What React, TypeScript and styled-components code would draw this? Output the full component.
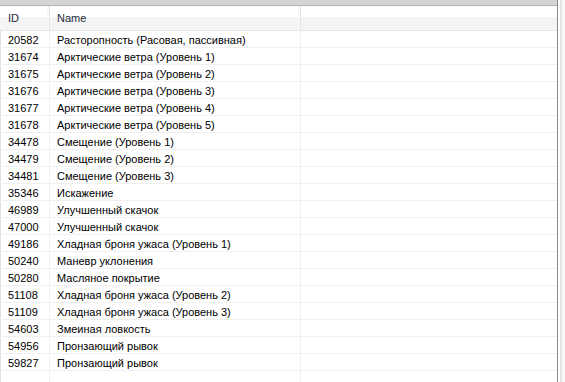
import React from "react";
import styled, { createGlobalStyle } from "styled-components";

const Global = createGlobalStyle`
  html, body { margin: 0; padding: 0; background: #ffffff; }
  body { font-family: "Liberation Sans", Arial, sans-serif; }
`;

const rows: [string, string][] = [
  ["20582", "Расторопность (Расовая, пассивная)"],
  ["31674", "Арктические ветра (Уровень 1)"],
  ["31675", "Арктические ветра (Уровень 2)"],
  ["31676", "Арктические ветра (Уровень 3)"],
  ["31677", "Арктические ветра (Уровень 4)"],
  ["31678", "Арктические ветра (Уровень 5)"],
  ["34478", "Смещение (Уровень 1)"],
  ["34479", "Смещение (Уровень 2)"],
  ["34481", "Смещение (Уровень 3)"],
  ["35346", "Искажение"],
  ["46989", "Улучшенный скачок"],
  ["47000", "Улучшенный скачок"],
  ["49186", "Хладная броня ужаса (Уровень 1)"],
  ["50240", "Маневр уклонения"],
  ["50280", "Масляное покрытие"],
  ["51108", "Хладная броня ужаса (Уровень 2)"],
  ["51109", "Хладная броня ужаса (Уровень 3)"],
  ["54603", "Змеиная ловкость"],
  ["54956", "Пронзающий рывок"],
  ["59827", "Пронзающий рывок"],
];

const Page = styled.div`
  width: 565px;
  height: 382px;
  display: flex;
  background: #ffffff;
  overflow: hidden;
`;

const ListFrame = styled.div`
  width: 557px;
  height: 382px;
  display: flex;
  flex-direction: column;
  border-right: 1px solid #8a8a8a;
  box-shadow: inset 1px 0 0 #e0e0e0;
`;

const TopBand = styled.div`
  height: 5px;
  background: #d4d4d4;
  border-bottom: 1px solid #b4b4b4;
  flex-shrink: 0;
`;

const Grid = styled.div`
  display: grid;
  grid-template-columns: 50px 251px 1fr;
`;

const HeaderRow = styled(Grid)`
  height: 24px;
  background: linear-gradient(#ffffff 0, #ffffff 11px, #f3f4f6 11px, #f3f4f6 100%);
  border-bottom: 1px solid #e5e5e5;
  flex-shrink: 0;
`;

const HeaderCell = styled.div<{ $pad: number }>`
  display: flex;
  align-items: center;
  padding-left: ${(p) => p.$pad}px;
  font-size: 11px;
  color: #1e2a3a;
  border-right: 1px solid #e5e5e5;
  box-shadow: inset -2px 0 0 #f8f8f8;
  &:last-child { border-right: none; box-shadow: none; }
`;

const Row = styled(Grid)`
  height: 16px;
  border-bottom: 1px solid #f0f0f0;
  flex-shrink: 0;
`;

const Cell = styled.div<{ $pad: number }>`
  display: flex;
  align-items: center;
  padding-left: ${(p) => p.$pad}px;
  padding-top: 1px;
  font-size: 11px;
  color: #000000;
  white-space: nowrap;
  border-right: 1px solid #f0f0f0;
  &:last-child { border-right: none; }
`;

const Filler = styled(Grid)`
  flex: 1;
`;

const FillCell = styled.div`
  border-right: 1px solid #f0f0f0;
  &:last-child { border-right: none; }
`;

const RightStrip = styled.div`
  flex: 1;
  background: #f7f7f7;
  border-left: 2px solid #ffffff;
  box-shadow: inset 2px 0 0 #e4e4e4;
`;

export default function App() {
  return (
    <>
      <Global />
      <Page>
        <ListFrame>
          <TopBand />
          <HeaderRow>
            <HeaderCell $pad={8}>ID</HeaderCell>
            <HeaderCell $pad={7}>Name</HeaderCell>
            <HeaderCell $pad={6} />
          </HeaderRow>
          {rows.map(([id, name]) => (
            <Row key={id}>
              <Cell $pad={8}>{id}</Cell>
              <Cell $pad={7}>{name}</Cell>
              <Cell $pad={6} />
            </Row>
          ))}
          <Filler>
            <FillCell />
            <FillCell />
            <FillCell />
          </Filler>
        </ListFrame>
        <RightStrip />
      </Page>
    </>
  );
}
